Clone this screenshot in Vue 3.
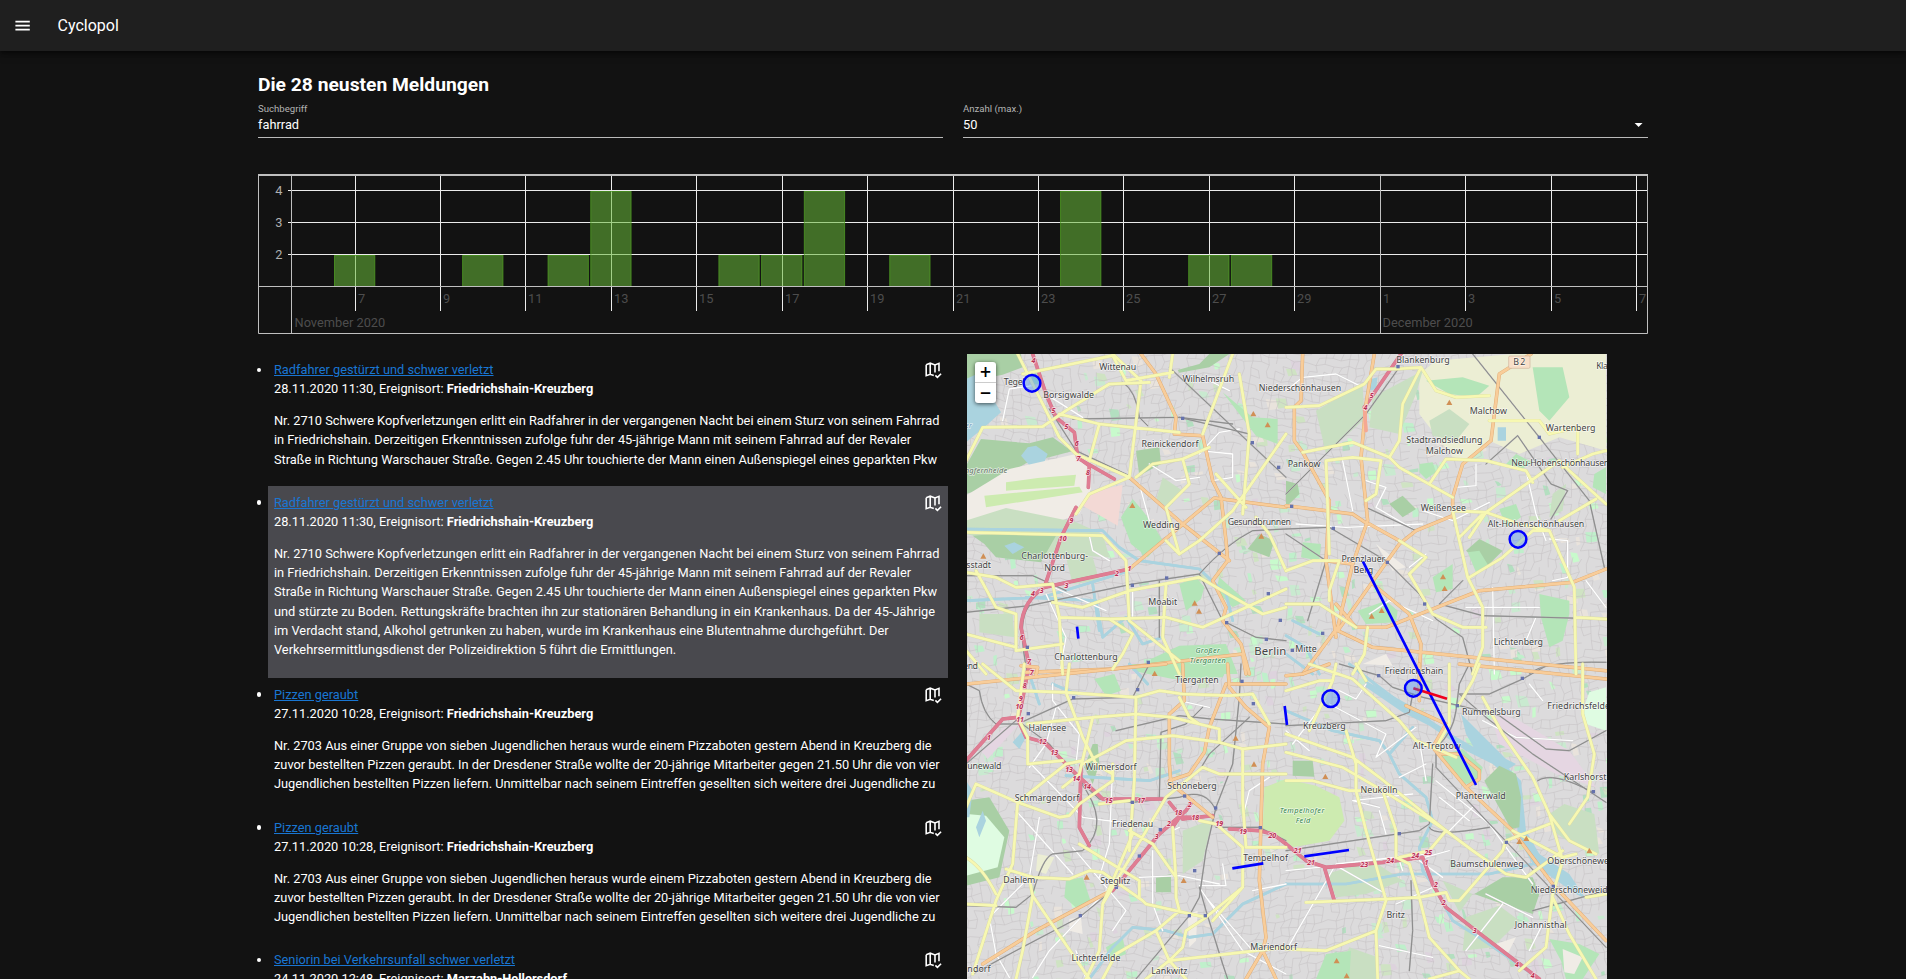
<script setup>
const shortText = 'Nr. 2710 Schwere Kopfverletzungen erlitt ein Radfahrer in der vergangenen Nacht bei einem Sturz von seinem Fahrrad in Friedrichshain. Derzeitigen Erkenntnissen zufolge fuhr der 45-jährige Mann mit seinem Fahrrad auf der Revaler Straße in Richtung Warschauer Straße. Gegen 2.45 Uhr touchierte der Mann einen Außenspiegel eines geparkten Pkw'
const longText = shortText + ' und stürzte zu Boden. Rettungskräfte brachten ihn zur stationären Behandlung in ein Krankenhaus. Da der 45-Jährige im Verdacht stand, Alkohol getrunken zu haben, wurde im Krankenhaus eine Blutentnahme durchgeführt. Der Verkehrsermittlungsdienst der Polizeidirektion 5 führt die Ermittlungen.'
const pizzaText = 'Nr. 2703 Aus einer Gruppe von sieben Jugendlichen heraus wurde einem Pizzaboten gestern Abend in Kreuzberg die zuvor bestellten Pizzen geraubt. In der Dresdener Straße wollte der 20-jährige Mitarbeiter gegen 21.50 Uhr die von vier Jugendlichen bestellten Pizzen liefern. Unmittelbar nach seinem Eintreffen gesellten sich weitere drei Jugendliche zu'
const reports = [
  { title: 'Radfahrer gestürzt und schwer verletzt', date: '28.11.2020 11:30', place: 'Friedrichshain-Kreuzberg', text: shortText },
  { title: 'Radfahrer gestürzt und schwer verletzt', date: '28.11.2020 11:30', place: 'Friedrichshain-Kreuzberg', text: longText, open: true },
  { title: 'Pizzen geraubt', date: '27.11.2020 10:28', place: 'Friedrichshain-Kreuzberg', text: pizzaText },
  { title: 'Pizzen geraubt', date: '27.11.2020 10:28', place: 'Friedrichshain-Kreuzberg', text: pizzaText },
  { title: 'Seniorin bei Verkehrsunfall schwer verletzt', date: '24.11.2020 12:48', place: 'Marzahn-Hellersdorf', text: '' },
]

// Timeline: days counted from 1 November
const dayX = (d) => 97.15 + (d - 7) * 42.71
const ticks = [7, 9, 11, 13, 15, 17, 19, 21, 23, 25, 27, 29, 31, 33, 35, 37].map((d) => ({
  x: Math.floor(dayX(d)) + 0.5,
  label: d > 30 ? d - 30 : d,
  month: d === 31,
}))
const bars = [[7, 2], [10, 2], [12, 2], [13, 4], [16, 2], [17, 2], [18, 4], [20, 2], [24, 4], [27, 2], [28, 2]].map(([d, n]) => ({
  x: dayX(d) - 20.65,
  y: n === 4 ? 17.5 : 81.5,
  h: n === 4 ? 95 : 31,
}))

// Residential street mesh, deterministic
let seed = 17
const rnd = () => (seed = (seed * 16807) % 2147483647) / 2147483647
const node = (i, j) => {
  const x = i * 25 - 30
  const y = j * 23 - 30
  return [
    (x + 22 * Math.sin(y / 130 + x / 400) + 4 * Math.sin(j * 3.1 + i)).toFixed(0),
    (y + 26 * Math.sin(x / 150 - y / 500) + 4 * Math.cos(i * 2.3 + j)).toFixed(0),
  ]
}
let mesh = ''
for (let i = 0; i < 82; i++) {
  for (let j = 0; j < 86; j++) {
    if (rnd() < 0.7) mesh += `M${node(i, j)}L${node(i + 1, j)}`
    if (rnd() < 0.7) mesh += `M${node(i, j)}L${node(i, j + 1)}`
  }
}
const patchColors = ['#c9ead0', '#bff0cb', '#cfe3c3', '#e9e3dc', '#c8facc', '#ddd3dd', '#b3dfc0']
const patches = Array.from({ length: 620 }, () => {
  const x = Math.round(rnd() * 1920)
  const y = Math.round(rnd() * 1890)
  const w = 8 + Math.round(rnd() * 26)
  const h = 8 + Math.round(rnd() * 24)
  const s = Math.round(rnd() * 10)
  return { d: `M${x} ${y}l${w} ${s - 5}l${s} ${h}l${-w} ${4}z`, c: patchColors[Math.floor(rnd() * 7)] }
})

const offsets = ['translate(0 0)', 'translate(960 0)', 'translate(0 930)', 'translate(960 930)']
const areas = [
  [
    ['wood', 'M0 0H165L170 40 110 62 70 70 25 115 0 118Z'],
    ['water', 'M0 75L45 55 60 100 90 150 105 175 60 215 0 265Z'],
    ['wood', 'M0 335L45 255 190 268 260 250 318 292 180 328 60 400 0 420Z'],
    ['water', 'M165 305L185 280 210 275 245 300 235 325 200 345Z'],
    ['sand', 'M0 425L130 345 330 300 370 320 375 405 340 480 230 520 0 500Z'],
    ['grass', 'M120 385L215 372 330 362 325 395 120 410ZM55 425L340 398 350 415 60 460Z'],
    ['pale', 'M0 500L120 462 330 505 410 540 430 610 240 600 0 540Z'],
    ['wood', 'M20 545L150 535 270 545 225 625 90 610 55 570Z'],
    ['water', 'M115 575L145 565 175 580 140 600Z'],
    ['pink', 'M375 415L470 392 455 515 345 452Z'],
    ['park', 'M465 490L500 435 530 470 560 510 590 560 545 610 495 570Z'],
    ['wood', 'M510 290L580 280 585 330 520 365Z'],
    ['wood', 'M635 48L700 30 730 0H790L730 40 640 56Z'],
    ['park', 'M770 115L860 190 935 195 935 270 870 245Z'],
    ['wood', 'M845 585L880 540 925 560 910 610Z'],
    ['park', 'M555 915L640 875 780 870 815 960H550Z'],
    ['pale', 'M300 610L380 610 400 680 320 690ZM40 780L140 780 145 850 40 835ZM590 370L650 410 610 460 570 440Z'],
    ['park', 'M640 690L690 670 715 700 705 735 660 770ZM760 670L840 740 800 760 750 710Z'],
  ],
  [
    ['field', 'M400 60L450 20 680 0H960V290L820 250 700 300 610 260 540 320 500 310 400 180Z'],
    ['pale', 'M260 130L410 50 390 120 340 240 250 220ZM430 200L490 165 550 210 510 260 440 245Z'],
    ['park', 'M420 80L530 70 610 95 570 130 490 120Z'],
    ['park', 'M740 40L830 40 850 130 790 200 760 170ZM660 330L690 300 740 325 700 350Z'],
    ['water', 'M635 220L660 220 660 260 635 260ZM255 75L275 70 270 105 250 110Z'],
    ['pale', 'M90 170L230 90 235 195 120 300ZM800 420L840 390 830 470 790 490Z'],
    ['wood', 'M0 380L35 390 40 420 0 460ZM310 450L350 425 390 465 350 490ZM540 590L580 555 650 590 600 640Z'],
    ['park', 'M400 330L440 325 450 355 420 375 400 355ZM545 595L580 590 610 640 570 655ZM640 465L690 450 705 490 660 520ZM925 360L960 340V420L920 400Z'],
    ['park', 'M440 670L500 630 500 705 450 715ZM760 720L850 740 850 780 830 860 790 880 765 790Z'],
    ['park', 'M215 770L300 740 335 770 330 805 240 810ZM50 565L105 570 100 620 45 610Z'],
    ['sand', 'M270 570L360 640 320 650ZM230 930L300 900 320 935Z'],
  ],
  [
    ['wood', 'M0 410L70 400 130 500 100 640 0 665Z'],
    ['mint', 'M0 450L60 455 115 520 95 610 0 635Z'],
    ['water', 'M0 350L20 380 10 460 0 460ZM30 490L50 440 60 470 40 520ZM140 235L170 200 180 220 160 255Z'],
    ['industry', 'M45 260L115 190 155 185 65 285Z'],
    ['park', 'M490 0H790L770 40 620 45 500 20Z'],
    ['wood', 'M355 310L380 240 395 240 400 300 380 360Z'],
    ['pale', 'M650 500L740 465 710 590 650 630Z'],
    ['wood', 'M570 640L615 630 615 685 570 685Z'],
    ['park', 'M300 650L350 640 375 715 335 735 295 700Z'],
    ['field', 'M215 570L265 580 240 630 210 620Z'],
    ['grass', 'M895 370L960 345V530L890 500Z'],
    ['sand', 'M665 750L695 740 690 830 670 850ZM310 765L345 760 350 810 310 800Z'],
    ['park', 'M420 850L470 820 480 870 430 890ZM385 45L445 30 465 80 420 95Z'],
  ],
  [
    ['grass', 'M0 345L90 365 160 400 175 470 130 530 20 550 0 530Z'],
    ['wood', 'M20 290L80 290 85 338 20 335Z'],
    ['park', 'M460 275L530 255 590 310 580 355 535 360Z'],
    ['water', 'M240 50L360 118 395 135 460 190 590 265 640 285 705 350 720 500 760 570 850 630 900 705 870 690 740 600 695 520 690 360 620 300 540 260 430 185 350 145 240 70ZM525 150L585 210 660 285 690 300 660 320 575 270 540 210Z'],
    ['wood', 'M595 350L640 305 690 330 705 400 700 490 675 495Z'],
    ['wood', 'M565 690L650 640 740 640 760 690 740 750 650 720Z'],
    ['pale', 'M120 630L260 590 350 650 240 690 150 700ZM470 650L560 690 520 745ZM540 760L640 725 700 770 620 850 530 860ZM190 850L275 880 280 945H150Z'],
    ['industry', 'M610 140L700 170 850 260 930 370 810 330 640 240Z'],
    ['park', 'M790 825L880 840 940 870 890 945H840L825 890ZM120 870L195 860 190 945H90Z'],
    ['sand', 'M830 855L890 880 865 930 835 925Z'],
    ['pale', 'M790 450L835 420 925 450 940 570 850 535 800 500Z'],
    ['mint', 'M890 140L910 85 960 70V200L900 180Z'],
    ['sand', 'M630 840L690 820 660 880 640 860Z'],
  ],
]
const lines = [
  [
    ['river', 'M0 525L410 530 460 580 520 620 700 645 780 720 800 800M180 730L390 740 410 850 480 790 530 870 590 850M0 740L230 730 490 650M380 690L400 830'],
    ['white', 'M255 130L350 190M110 200L130 105 200 95M550 330L630 380 700 370M700 300L760 235 820 225M240 690L420 770M370 545L380 590 430 620M500 710V790M240 720L300 850 280 960M720 75L790 110M700 290L800 300 800 370 740 380M520 390L550 500'],
    ['rail', 'M610 40L960 370M250 165L330 290 490 365M320 195L640 190 800 210M0 775L190 755 500 690 700 660 770 800 870 850 960 860M700 660Q780 570 860 530L960 525M190 755Q150 800 185 960M470 85Q510 110 520 190L545 215M640 190L850 240M0 665H200L300 710M580 680V850'],
    ['orange', 'M525 0L570 60 630 190 625 240 710 245 740 380 765 430 780 560 785 620 740 680 780 760 770 800 825 870 850 960M490 370L650 510 790 620M745 432L960 460M490 645L745 432M180 955L440 945 830 900 840 960'],
    ['yellow', 'M155 0L185 60 220 130 245 180 280 250 330 300 490 370 525 80 440 0M170 60L440 5 480 80 620 55M0 320L50 220 230 218 300 170 430 90 550 85M280 180L400 210 640 235M400 210L370 320M510 370L560 330 650 315 730 280M650 315L670 390 600 460M0 535L410 545 480 620 490 800M330 480L370 420 490 370M0 655L90 670 150 700 260 690 280 790 430 795 600 790 710 820 960 705M280 790L290 960M260 745L350 760 490 710 700 670 890 780 960 760M30 650L90 760 150 780 150 890 290 870M0 840L150 880M490 800L640 920M600 690L590 850 640 960M600 560L640 600 700 560 800 470 960 240M870 490L910 540 960 650M750 360L840 460M800 0L740 160 710 240M820 60L850 240 830 480M620 0L610 70M0 890L60 960M600 460L640 600M430 795L500 840 470 900 440 945'],
    ['motorway', 'M200 0L240 120 270 190 325 235 335 310 370 335 367 400M330 460L285 550 235 700Q170 740 165 820L195 960M235 700L490 645M340 315L445 375'],
  ],
  [
    ['river', 'M0 845L60 880 100 960M0 900L80 960M20 800L100 840'],
    ['white', 'M0 110L50 70 150 60 220 95M170 320L200 470M240 380L300 400 270 460 390 530M570 330V395L510 400M610 445L500 500 410 470M720 350L750 480 780 560M620 700L625 960M900 680L960 760M750 790L720 860 640 870M790 555L845 560 845 670 800 680M30 510L180 520 410 510M540 760L760 760M370 640L420 600M250 780L310 740 440 800'],
    ['rail', 'M560 0L760 250 910 440 955 640M0 420L40 380 240 180 340 40M0 525L130 520 300 620 400 720 450 795 530 850 560 960M600 330L695 245 795 390 845 410 795 495M0 540L120 620 65 800M730 960Q770 920 960 925M530 680L460 750 590 785 960 795M240 460L390 530'],
    ['orange', 'M50 0L45 140 25 160V260L50 295 130 440 120 620 150 850M0 455L200 480 245 510M265 0L240 150 225 310 245 500 200 630 155 820 50 960M500 485L390 530 340 570 155 830 260 880 960 950M735 0L640 60 615 260 530 330 500 430V490M250 510L340 560M260 690L370 780 405 870 400 960M150 750L210 820 300 820 580 710 860 685 960 645M120 620L200 630'],
    ['yellow', 'M0 160L100 155 235 90 270 45 330 45 405 40 450 110 510 130 610 125M405 40L350 150 340 260 310 310 200 265 50 295M310 310L340 340 500 430M430 390L480 315 600 320 720 350 740 385M610 200L760 200 790 240 875 220 875 300M500 470L600 475 700 510 790 530 865 700 870 960M500 470L545 670 590 760 590 880 560 960M550 670L650 610 740 530 790 530M960 450L850 350 820 320 600 475M550 550L600 475M960 290L920 300 830 340M820 500L930 435M340 560L420 610 370 660 440 780M0 650L80 620 160 620 130 710V740M0 750L100 750 210 820M440 780L530 820 600 820M870 790L960 795M120 320L130 600M285 320L270 420 240 440M120 320L200 310 285 320M520 550L590 480M245 820L235 900 200 960'],
    ['motorway', 'M345 0L235 160'],
    ['peach', 'M235 160L240 230'],
  ],
  [
    ['river', 'M370 945L440 850 500 790 600 800 670 820 740 810 830 720 960 660M300 335L550 350 640 320M260 60L330 90M190 30L220 120M490 0L545 60'],
    ['white', 'M185 290L350 460 500 480M220 460L190 640 70 760 90 870 130 940M150 440L320 630M320 550L480 740 440 800M360 945L330 860M560 560V720L590 800M700 670L830 860 960 930M720 700L860 860M700 665L780 665 770 600M960 660L860 680M910 340L850 380 830 460M640 490L620 500M270 130L240 240 190 310M260 60V110L340 210 330 300M520 640L640 635 760 660M440 310L430 540 400 640M640 110L730 130M440 660L250 860 200 940'],
    ['rail', 'M0 60L40 80Q50 150 90 180L155 180 320 105 500 100 550 0M825 0L820 100 800 300 750 430 720 560 700 700 670 755 510 945M0 300L155 165M155 170L250 240 340 350 400 405 500 415 640 400Q720 370 750 440M340 350Q440 480 350 560L260 570Q230 580 200 690L150 730 0 725M750 490L880 490 960 530M735 165L640 155 450 200M735 165L960 180M580 400L585 205 660 180 710 130M450 670L340 760 150 860 20 930M700 670L720 740 770 900 785 945M850 160L730 270 700 320'],
    ['orange', 'M0 60L440 15 600 0M650 0L655 110 610 150V300L615 360 660 395 740 460M785 0L790 70 840 130 910 190 890 300 880 650 900 820 890 860 840 945M780 60L730 190 715 265 670 330 610 350M425 685L210 800 50 900M165 5L215 10 210 35M790 60H960M890 860L930 945M890 860L910 855'],
    ['yellow', 'M50 0L150 80 300 85 510 100 580 80 650 90 790 95 860 90 910 180M175 0L155 160 185 220 185 300 290 290M310 0L300 85 350 220 390 300 440 330M510 100L505 350 490 560M185 180L380 160 510 150 620 160 760 195 760 235 830 255 960 240M350 300L480 230 620 215 760 235M380 160L340 330 290 370M0 430L30 360 155 415 280 460 310 455 340 420 440 350V300M155 415L140 600 90 710 20 930M155 415L300 300 350 290M490 410L400 420M120 615L200 640 310 645 370 620 410 625 530 710 540 720 720 760 830 670 830 550 750 480 700 470M190 645L200 695 370 945M200 695L170 860 150 945M340 540L520 650V700M630 650L620 490M410 720L400 860 360 945M410 720L600 400 710 310 760 330 960 330M490 500L560 540 630 640V700L640 740 570 800 450 870 410 945M720 760L660 800 650 850 610 890 960 850M610 890L570 800M610 890L540 945M610 890L660 945M830 255V410L840 550 960 550M740 770L830 670M0 720L90 725M500 510L410 720M0 580Q50 610 90 690M700 180L670 160 640 100'],
    ['motorway', 'M190 0L165 130 155 165 180 220 235 235 320 320 410 405 590 405M0 290L110 165 155 160M345 305L340 490 370 545M440 680L580 510 660 440 680 410M610 415L650 465 740 455M620 490L640 460 700 460M790 495L880 500 920 510 960 540'],
  ],
  [
    ['river', 'M190 0L280 70 360 130 460 190M380 190L310 270 340 330 420 400 440 470 400 550 410 620 440 660 500 770 580 820 760 945M0 660L180 660 350 630 610 630 740 600M0 140L140 200 280 230 310 270'],
    ['white', 'M0 200L70 260M160 80L210 105 240 60M130 120L300 210 270 280 390 190M340 340L420 300M200 410L380 390M200 410L280 430M450 350L610 480 740 660M400 230L420 350M0 620L150 605 300 690M0 860L150 600 420 570M380 590L490 560M600 690L740 760M540 860L650 720M440 670L330 720M280 845L440 880M460 400L550 470M280 440L300 510M120 110L20 240M590 170L690 220 860 230M560 430L490 500M730 60L770 110M730 860L770 780 800 790M400 590L470 640M350 620L330 560'],
    ['rail', 'M160 0L280 35 320 70 410 100 520 125 640 155 780 255 850 260 960 200M0 185L300 170 370 145 380 90M550 0L520 60 510 140Q500 210 450 250V310L800 680 960 850M960 415L740 270 600 160 520 90 610 90 710 45 790 0M440 300L430 480 400 500 0 560M430 490Q440 520 610 490M375 650L380 800 370 920M755 350Q800 320 920 385M740 740L960 680'],
    ['orange', 'M360 125L480 180 440 250 540 370 680 500 800 660 960 830M400 0L400 110M0 35L50 30 130 0M520 0L960 45M460 270L520 270 580 320V345L540 370'],
    ['yellow', 'M150 0L140 50 70 200M0 80L100 50 140 50M70 0L200 45 340 170 390 230 440 250 510 280M0 210L200 280 280 340 480 500 560 560 660 630 720 640 830 560M0 265L170 310 290 380 420 460 480 500 430 560 340 580M180 200L210 300 210 380 240 500 300 710 270 800 275 945M0 350L80 350 190 380 290 380 330 500 330 580 370 600 400 700 430 820 520 920 550 945M60 715L300 705 400 700 480 685 490 710 520 710 650 560 660 530 790 480M590 100L650 210 740 340 790 450 850 530 930 570M790 450L830 590 800 690 780 850 700 920M0 855L120 860 270 800M430 945L520 920M520 120L560 50 580 0M490 0V180L450 250M680 500L830 580 870 570M800 700L850 810 930 945M240 50L210 0M890 0L890 150 925 270 905 400 850 480M900 700L960 690'],
    ['motorway', 'M0 540L60 590 120 610 290 595 410 580 440 660 480 730 570 800 760 945M115 610L145 710'],
  ],
]
const styles = ['river', 'white', 'rail', 'motorway', 'orange', 'yellow', 'peach']

// Labels: text, centre x, baseline y, width, style
const labels = [
  [['Wittenau', 455, 48, 111], ['Wilhelmsruh', 727, 85, 155], ['Tegel', 145, 94, 63], ['Borsigwalde', 308, 132, 152], ['Reinickendorf', 612, 280, 171], ['Wedding', 586, 522, 110], ['Gesundbrunnen', 880, 513, 190], ['Charlottenburg-', 266, 616, 200], ['Nord', 266, 650, 62], ['sstadt', 38, 641, 74], ['Moabit', 590, 753, 87], ['Charlottenburg', 360, 918, 190], ['Berlin', 913, 903, 96, 'city'], ['Großer', 725, 898, 73, 'parkname'], ['Tiergarten', 725, 926, 108, 'parkname'], ['ngfernheide', 60, 356, 128, 'italic'], ['er', 8, 222, 20, 'river-name']],
  [['Blankenburg', 411, 26, 160], ['Malchow', 607, 180, 111], ['Wartenberg', 854, 232, 149], ['Stadtrandsiedlung', 475, 266, 228], ['Malchow', 475, 299, 111], ['Niederschönhausen', 42, 111, 247], ['Pankow', 54, 338, 98], ['Neu-Hohenschönhausen', 823, 336, 294], ['Weißensee', 472, 471, 136], ['Alt-Hohenschönhausen', 750, 519, 290], ['Prenzlauer', 232, 623, 131], ['Berg', 232, 656, 59], ['Lichtenberg', 697, 873, 148], ['Mitte', 60, 893, 64], ['Kla', 948, 45, 35]],
  [['end', 14, 15, 44], ['Tiergarten', 693, 56, 130], ['Halensee', 244, 200, 113], ['unewald', 55, 315, 103], ['Wilmersdorf', 435, 317, 154], ['Schöneberg', 678, 374, 148], ['Schmargendorf', 243, 412, 194], ['Friedenau', 500, 490, 124], ['Tempelhof', 899, 590, 134], ['Dahlem', 160, 657, 96], ['Steglitz', 448, 660, 91], ['Lichterfelde', 390, 890, 147], ['Lankwitz', 610, 929, 109], ['ndorf', 39, 923, 70], ['Mariendorf', 923, 857, 140]],
  [['Friedrichshain', 384, 29, 176], ['Rummelsburg', 616, 153, 176], ['Kreuzberg', 115, 196, 128], ['Friedrichsfelde', 878, 135, 188], ['Alt-Treptow', 452, 255, 144], ['Karlshorst', 897, 348, 128], ['Neukölln', 279, 386, 111], ['Plänterwald', 584, 404, 150], ['Tempelhofer', 48, 448, 134, 'parkname'], ['Feld', 51, 477, 44, 'parkname'], ['Baumschulenweg', 603, 610, 220], ['Oberschöneweide', 895, 600, 222], ['Niederschöneweide', 857, 688, 246], ['Britz', 329, 762, 55], ['Johannisthal', 764, 792, 156]],
]
const shields = [
  [[4, 202, 26], [5, 262, 178], [5, 301, 224], [6, 332, 276], [7, 337, 320], [8, 366, 362], [9, 316, 508], [10, 290, 562], [1, 490, 651], [2, 453, 665], [3, 301, 702], [4, 201, 727], [3, 227, 716], [6, 167, 858], [7, 189, 929]],
  [[5, 257, 132], [4, 238, 168]],
  [[8, 176, 73], [9, 165, 110], [10, 160, 134], [11, 162, 174], [1, 69, 227], [12, 230, 239], [13, 265, 274], [13, 309, 324], [14, 331, 351], [14, 363, 374], [15, 428, 418], [17, 525, 418], [18, 637, 454], [18, 688, 468], [2, 671, 430], [2, 609, 487], [3, 572, 525], [19, 760, 486], [19, 831, 510], [20, 919, 521], [7, 197, 33]],
  [[21, 35, 567], [21, 75, 603], [23, 235, 609], [24, 313, 596], [24, 388, 581], [25, 427, 573], [1, 421, 604], [2, 450, 669], [2, 473, 722], [3, 566, 808], [4, 693, 908], [4, 740, 943]],
]
const hills = [
  [[862, 180], [905, 213], [499, 455], [52, 607], [686, 748], [699, 772], [886, 547]],
  [[490, 146], [471, 669], [476, 704], [287, 770], [257, 787]],
  [[566, 29], [809, 223], [864, 301], [362, 640], [653, 650]],
  [[118, 338], [721, 524], [700, 533], [910, 561], [152, 891], [182, 936]],
]
const stations = [
  [[650, 193], [859, 266], [938, 340], [760, 598], [602, 672], [499, 694], [184, 880], [907, 719], [782, 806], [901, 856], [547, 925], [943, 799]],
  [[336, 38], [760, 250], [17, 457], [142, 523], [304, 625], [416, 750], [110, 838], [19, 889]],
  [[515, 77], [323, 101], [187, 149], [828, 52], [862, 119], [499, 415], [656, 396], [749, 432], [583, 497], [520, 576], [451, 670], [343, 755], [670, 755], [718, 755], [686, 620], [883, 491]],
  [[278, 35], [709, 43], [514, 125], [922, 383], [340, 509], [661, 535], [802, 667]],
]
</script>

<template>
  <div class="page">
    <header class="bar">
      <svg class="menu" viewBox="0 0 24 24"><path d="M3 6h18v2H3V6m0 5h18v2H3v-2m0 5h18v2H3v-2Z" /></svg>
      <span class="brand">Cyclopol</span>
    </header>

    <main class="content">
      <h2>Die 28 neusten Meldungen</h2>
      <div class="fields">
        <div class="field">
          <label>Suchbegriff</label>
          <div class="value">fahrrad</div>
        </div>
        <div class="field">
          <label>Anzahl (max.)</label>
          <div class="value">50<svg class="caret" viewBox="0 0 24 24"><path d="M7 10l5 5 5-5z" /></svg></div>
        </div>
      </div>

      <svg class="chart" viewBox="0 0 1390 160" width="1390" height="160">
        <g class="grid">
          <path v-for="y in [16.5, 48.5, 80.5]" :key="y" :d="`M30 ${y}H1389`" />
          <template v-for="t in ticks" :key="t.x">
            <path v-if="!t.month" :d="`M${t.x} 2V137`" />
          </template>
        </g>
        <rect v-for="b in bars" :key="b.x" class="count" :x="b.x" :y="b.y" width="40.3" :height="b.h" />
        <g class="frame">
          <path d="M0 1H1390" class="top" />
          <path d="M.5 1V159.5H1389.5V1M33.5 2V159M0 112.5H1389M1122.5 2V159" />
        </g>
        <g class="ylab">
          <text x="24.5" y="21">4</text><text x="24.5" y="53">3</text><text x="24.5" y="85">2</text>
        </g>
        <g class="xlab">
          <text v-for="t in ticks" :key="t.x" :x="t.x + 2.5" y="129">{{ t.label }}</text>
          <text x="36.5" y="153">November 2020</text>
          <text x="1124.5" y="153">December 2020</text>
        </g>
      </svg>

      <div class="columns">
        <ul class="reports">
          <li v-for="(r, i) in reports" :key="i" :class="{ open: r.open }">
            <div class="head">
              <a>{{ r.title }}</a>
              <svg class="mapicon" viewBox="0 0 24 24">
                <path d="M4 5.8L9 4l6 2.200L20 4.200V14M4 5.800V19.600L9 17.800L13.500 19.300M9 4V17.800M15 6.200V15.500" />
                <path d="M15.500 19.300L18 21.700L22.600 17.200" />
              </svg>
            </div>
            <div class="meta">{{ r.date }}, Ereignisort: <strong>{{ r.place }}</strong></div>
            <p>{{ r.text }}</p>
          </li>
        </ul>

        <div class="map">
          <svg class="tiles" viewBox="3 0 1920 1890" width="640" height="630">
            <rect width="1930" height="1890" fill="#dcdbdc" />
            <path v-for="(p, i) in patches" :key="i" :d="p.d" :fill="p.c" />
            <path class="mesh" :d="mesh" />
            <g v-for="(o, t) in offsets" :key="'a' + t" :transform="o">
              <path v-for="(a, i) in areas[t]" :key="i" :class="a[0]" :d="a[1]" />
            </g>
            <template v-for="s in styles" :key="s">
              <g v-for="(o, t) in offsets" :key="s + t" :transform="o">
                <template v-for="(l, i) in lines[t]" :key="i">
                  <path v-if="l[0] === s" :class="['road', s, 'casing']" :d="l[1]" />
                  <path v-if="l[0] === s" :class="['road', s]" :d="l[1]" />
                </template>
              </g>
            </template>
            <g v-for="(o, t) in offsets" :key="'l' + t" :transform="o">
              <path v-for="(h, i) in hills[t]" :key="'h' + i" class="hill" :d="`M${h[0]} ${h[1] - 9}l9 16h-18z`" />
              <rect v-for="(s, i) in stations[t]" :key="'s' + i" class="station" :x="s[0] - 5" :y="s[1] - 5" width="10" height="10" />
              <text v-for="(s, i) in shields[t]" :key="'n' + i" class="exit" :x="s[1]" :y="s[2]">{{ s[0] }}</text>
              <text v-for="(l, i) in labels[t]" :key="i" :class="['name', l[4]]" :x="l[1]" :y="l[2]" :textLength="l[3]">{{ l[0] }}</text>
            </g>
            <rect class="shield" x="1628" y="6" width="64" height="37" rx="4" />
            <text class="name" x="1660" y="33" textLength="36">B 2</text>
            <g class="overlay">
              <path d="M1191 623L1530 1293M333 818L337 854M956 1056L963 1113M799 1543L892 1528M1015 1507L1149 1488" />
              <path class="red" d="M1342 1003L1443 1034" />
              <circle cx="198" cy="88" r="25" /><circle cx="1656" cy="556" r="25" />
              <circle cx="1094" cy="1034" r="25" /><circle cx="1342" cy="1003" r="25" />
            </g>
          </svg>
          <div class="zoom"><span>+</span><span>−</span></div>
        </div>
      </div>
    </main>
  </div>
</template>

<style>
html, body { background: #121212; overflow: hidden; }
</style>

<style scoped>
.page { height: 979px; overflow: hidden; background: #121212; color: #fff; font: 12.8px/19.2px Roboto, sans-serif; }
.bar { position: relative; height: 51.2px; background: #1f1f1f; display: flex; align-items: center; padding-left: 12.8px; box-shadow: 0 2px 4px rgba(0, 0, 0, .4), 0 4px 8px rgba(0, 0, 0, .25); }
.menu { width: 19.2px; height: 19.2px; fill: #fff; }
.brand { font-size: 16px; margin-left: 25.6px; }
.content { width: 1390px; margin: 0 auto; }
h2 { margin: 20px 0 0; font-size: 19.25px; line-height: 27.8px; font-weight: 700; }
.fields { display: grid; grid-template-columns: 1fr 1fr; gap: 20px; height: 75px; padding-top: 2px; box-sizing: border-box; }
.field { height: 36px; border-bottom: 1px solid #bababa; }
label { display: block; font-size: 9.6px; line-height: 16px; color: #b4b4b4; }
.value { display: flex; justify-content: space-between; align-items: center; line-height: 15px; }
.caret { width: 19.2px; height: 19.2px; fill: #fff; margin: -2px 0; }
.chart { display: block; font-size: 12.8px; }
.grid { stroke: #ececec; fill: none; }
.frame { stroke: #bfbfbf; fill: none; }
.frame .top { stroke-width: 2; }
.count { fill: rgba(104, 185, 56, .55); stroke: rgba(80, 160, 35, .75); }
.ylab { fill: #b0b0b0; text-anchor: end; }
.xlab { fill: #4d4d4d; }
.columns { display: grid; grid-template-columns: 689.8px 640px; column-gap: 19.2px; margin-top: 19.6px; }
.reports { list-style: none; margin: 0; padding: 0 0 0 9.6px; }
li { position: relative; height: 120px; padding: 6.4px; }
li::before { content: ""; position: absolute; left: -11px; top: 14px; width: 4.500px; height: 4.500px; border-radius: 50%; background: #fff; }
.open { background: #49494e; height: 179.2px; }
.head { display: flex; justify-content: space-between; height: 19.2px; }
.head a { color: #1976d2; text-decoration: underline; }
.mapicon { width: 19.2px; height: 19.2px; fill: none; stroke: #fff; stroke-width: 2; margin-right: -.6px; }
.meta { height: 19.2px; }
p { margin: 12.8px 0; height: 56px; overflow: hidden; }
.open p { height: auto; }
.map { position: relative; width: 640px; height: 630px; overflow: hidden; margin-top: .4px; }
.tiles { display: block; }
.mesh { fill: none; stroke: #c4c1c3; stroke-width: 1.600; }
.wood { fill: #a9cfa5; } .park { fill: #b4e5b8; } .pale { fill: #c9dfc2; } .mint { fill: #dffce2; }
.water { fill: #aad3df; } .sand { fill: #f0ece6; } .grass { fill: #cdebb0; }
.pink { fill: #f3d9d5; } .industry { fill: #e5d6e2; }
path.field { fill: #eceed4; height: auto; }
.road { fill: none; stroke-linejoin: round; stroke-linecap: round; }
.river { stroke: #aad3df; stroke-width: 8; }
.white { stroke: #fff; stroke-width: 4; } .white.casing { stroke: #ccc; stroke-width: 5; }
.rail { stroke: #8c8c8c; stroke-width: 3; } .rail.casing { stroke: #b4b4b4; stroke-width: 4.500; }
.yellow { stroke: #f7f8b2; stroke-width: 8; } .yellow.casing { stroke: #d9daa2; stroke-width: 10; }
.orange { stroke: #f8cd9a; stroke-width: 8; } .orange.casing { stroke: #dfaa72; stroke-width: 10.500; }
.motorway { stroke: #e07d93; stroke-width: 9; } .motorway.casing { stroke: #d0758a; stroke-width: 11; }
.peach { stroke: #f5a893; stroke-width: 10; }
.hill { fill: #d08f55; } .station { fill: #6672ad; }
.name { font: 26.500px "Noto Sans", sans-serif; text-anchor: middle; fill: #444; stroke: rgba(255, 255, 255, .65); stroke-width: 4; paint-order: stroke; stroke-linejoin: round; }
.city { font-size: 34px; }
.parkname { font-style: italic; font-size: 22px; fill: #31834b; }
.italic { font-style: italic; font-size: 23px; fill: #667366; }
.river-name { font-style: italic; font-size: 22px; fill: #6f9bbb; }
.exit { font: italic bold 21px "Noto Sans", sans-serif; text-anchor: middle; fill: #b92f52; stroke: #f7dce2; stroke-width: 4; paint-order: stroke; }
.shield { fill: #f8dfc8; stroke: #d0b59d; stroke-width: 2; }
.overlay { fill: none; stroke: #00f; stroke-width: 8; }
.overlay .red { stroke: #f0001c; }
.overlay circle { fill: rgba(51, 136, 255, .35); stroke-width: 7.500; }
.zoom { position: absolute; left: 8px; top: 8px; width: 21px; background: #fff; border-radius: 3px; box-shadow: 0 1px 4px rgba(0, 0, 0, .65); color: #000; font: bold 15px/20px "DejaVu Sans", sans-serif; text-align: center; }
.zoom span { display: block; height: 20px; }
.zoom span + span { border-top: 1px solid #ccc; }
</style>
